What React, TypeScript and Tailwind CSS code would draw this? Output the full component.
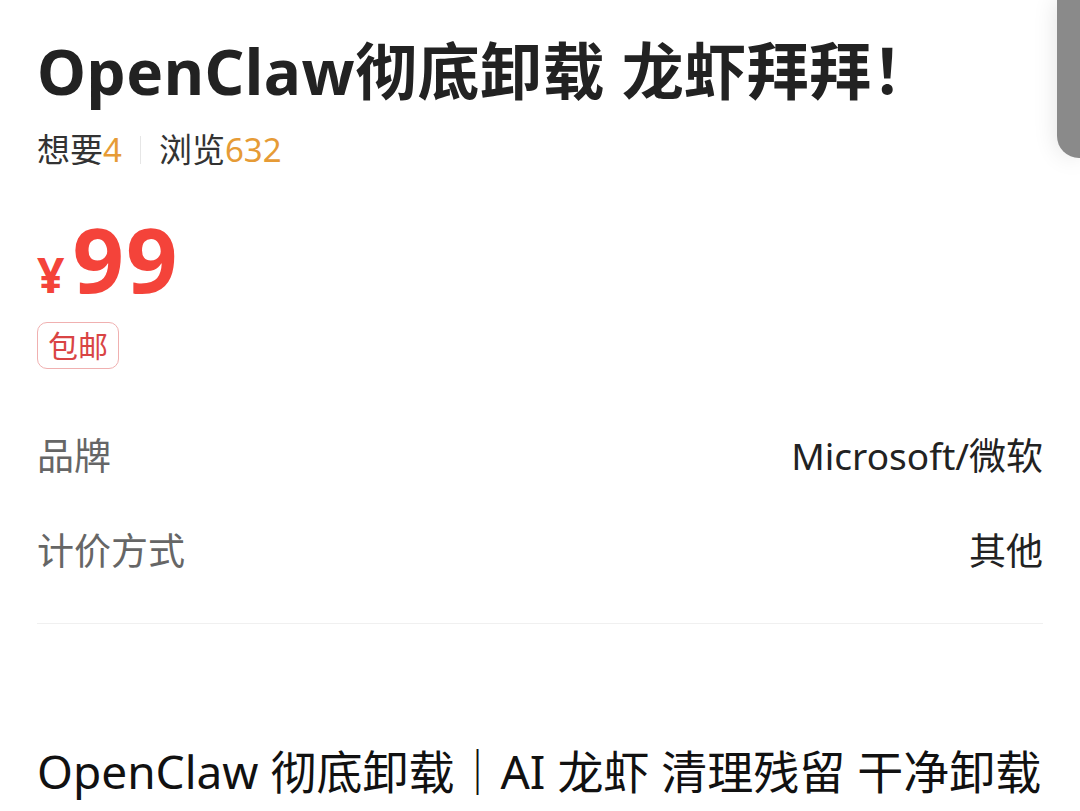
import React from 'react';

const font = { fontFamily: '"Noto Sans", "Noto Sans CJK SC", sans-serif' };

function SpecRow({ label, value }: { label: string; value: string }) {
  return (
    <div className="flex h-[95px] items-center justify-between">
      <span className="text-[37px] text-[#666666]">{label}</span>
      <span className="text-[37px] text-[#222222]">{value}</span>
    </div>
  );
}

export default function App() {
  return (
    <div className="relative h-[811px] w-[1080px] overflow-hidden bg-white" style={font}>
      <div className="flex flex-col px-[37px] pt-[35px]">
        <h1 className="text-[62px] font-bold leading-[72px] tracking-[0.5px] text-[#222222]">
          OpenClaw彻底卸载 龙虾拜拜！
        </h1>

        <div className="mt-[23px] flex h-[40px] items-center text-[33px] leading-[40px] text-[#333333]">
          <span>
            想要<span className="text-[#e69b36]">4</span>
          </span>
          <span className="mx-[18px] h-[28px] w-px bg-[#e6e6e6]" />
          <span>
            浏览<span className="text-[#e69b36]">632</span>
          </span>
        </div>

        <div className="mt-[43px] flex h-[88px] items-baseline font-bold leading-none text-[#f4433a]">
          <span className="mr-[8px] text-[48px]">¥</span>
          <span className="text-[90px] tracking-[2px]">99</span>
        </div>

        <div className="mt-[21px] flex">
          <span className="flex h-[47px] items-center rounded-[10px] border-[1.5px] border-[#f0b0b0] px-[10px] text-[30px] text-[#d94444]">
            包邮
          </span>
        </div>

        <div className="mt-[39px] flex flex-col">
          <SpecRow label="品牌" value="Microsoft/微软" />
          <SpecRow label="计价方式" value="其他" />
        </div>

        <div className="mt-[25px] h-px bg-[#f0f0f0]" />

        <p className="mt-[117px] text-[46px] leading-[60px] text-[#111111]">
          OpenClaw 彻底卸载｜AI 龙虾 清理残留 干净卸载
        </p>
      </div>

      <div className="absolute right-0 top-0 h-[158px] w-[23px] rounded-bl-[22px] bg-[#8a8a8a] shadow-[0_0_24px_rgba(0,0,0,0.12)]" />
    </div>
  );
}
